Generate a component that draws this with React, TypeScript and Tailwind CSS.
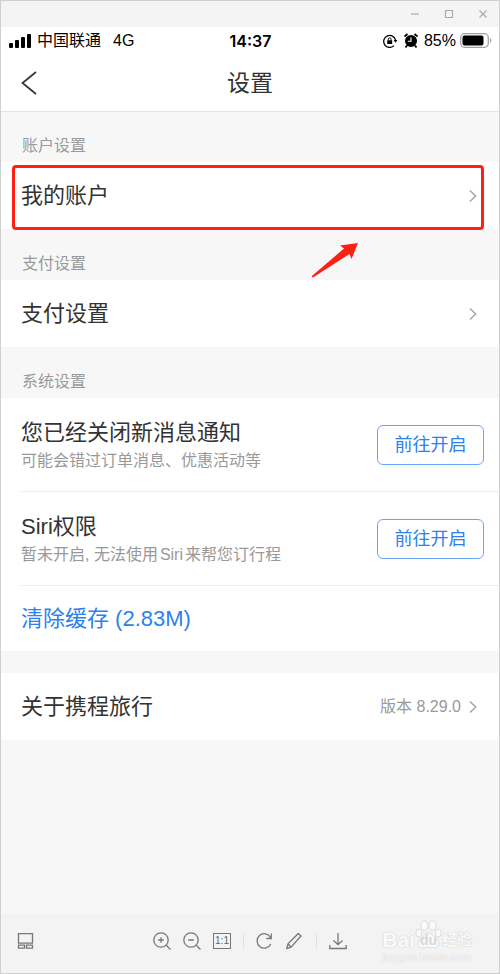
import React from "react";

const SectionTitle = ({ children }: { children: React.ReactNode }) => (
  <h2 className="flex h-[51px] items-end px-[21px] pb-1 text-base leading-6 text-[#9a9a9a] first:h-[50px]">
    {children}
  </h2>
);

const Chevron = () => (
  <svg width="8" height="14" viewBox="0 0 8 14" fill="none" stroke="#a8a8a8" strokeWidth="1.6">
    <path d="M1 1.500 6.600 7 1 12.500" />
  </svg>
);

const LinkRow = ({ label, note }: { label: string; note?: string }) => (
  <a href="#" className="flex h-[67px] items-center justify-between bg-white pr-[22px] pl-5">
    <span className="text-[22px] leading-8">{label}</span>
    <span className="flex items-center gap-2 text-base text-[#999]">
      {note}
      <Chevron />
    </span>
  </a>
);

const permissions = [
  { title: "您已经关闭新消息通知", desc: "可能会错过订单消息、优惠活动等" },
  { title: "Siri权限", desc: "暂未开启, 无法使用Siri来帮您订行程" },
];

const windowButtons = [
  { label: "最小化", d: "M6 12h8" },
  { label: "最大化", d: "M6.500 8.500h7v7h-7z" },
  { label: "关闭", d: "M6.500 8.500l7 7M13.500 8.500l-7 7" },
];

const TitleBar = () => (
  <div className="flex h-[26px] items-center justify-end gap-[10px] bg-[#f4f4f4] pr-1 text-[#aaa]">
    {windowButtons.map((b) => (
      <button key={b.label} aria-label={b.label} className="flex w-6 items-center justify-center">
        <svg width="20" height="24" viewBox="0 0 20 24" fill="none" stroke="currentColor" strokeWidth="1.2">
          <path d={b.d} />
        </svg>
      </button>
    ))}
  </div>
);

const StatusBar = () => (
  <div className="grid h-[27px] grid-cols-[1fr_auto_1fr] items-center pr-[7px] pl-2 text-base text-black">
    <div className="flex items-center">
      <svg width="23" height="14" viewBox="0 0 23 14" fill="currentColor">
        <rect x="0" y="9" width="4" height="5" rx="1" />
        <rect x="6" y="6" width="4" height="8" rx="1" />
        <rect x="12" y="3" width="4" height="11" rx="1" />
        <rect x="18" y="0" width="4" height="14" rx="1" />
      </svg>
      <span className="ml-[5px]">中国联通</span>
      <span className="ml-3">4G</span>
    </div>
    <span className="font-['Inter',sans-serif] font-semibold">14:37</span>
    <div className="flex items-center justify-end">
      <svg width="15" height="14" viewBox="0 0 15 14" fill="none" stroke="currentColor" strokeWidth="1.3">
        <path d="M11 11.600A6 6 0 1 1 12.600 6.200" />
        <path d="M10.600 6h3.800l-1.900 2.800z" fill="currentColor" stroke="none" />
        <rect x="4.200" y="6.300" width="5" height="3.800" rx=".5" fill="currentColor" stroke="none" />
        <path d="M5.300 6.500V5.300a1.400 1.400 0 0 1 2.800 0v1.200" strokeWidth="1" />
      </svg>
      <svg className="ml-[6px]" width="14" height="15" viewBox="0 0 14 15">
        <circle cx="7" cy="8" r="6" />
        <path d="M.5 3.500 3.500 1M13.500 3.500l-3-2.500M3 12.500l-1.500 2M11 12.500l1.500 2" stroke="#000" strokeWidth="1.8" />
        <path d="M7 4.500V8.200H3.800" fill="none" stroke="#fff" strokeWidth="1.1" />
      </svg>
      <span className="ml-[6px]">85%</span>
      <svg className="ml-1" width="32" height="15" viewBox="0 0 32 15">
        <rect x=".7" y=".7" width="27.6" height="13.6" rx="4" fill="none" stroke="#a0a0a0" strokeWidth="1.3" />
        <rect x="2.500" y="2.500" width="21" height="10" rx="2" />
        <path d="M30 5c1.800.7 1.800 4.300 0 5z" fill="#a0a0a0" />
      </svg>
    </div>
  </div>
);

const Tool = ({ label, children }: { label: string; children: React.ReactNode }) => (
  <button aria-label={label}>
    <svg width="18" height="18" viewBox="0 0 18 18" fill="none" stroke="currentColor" strokeWidth="1.3">
      {children}
    </svg>
  </button>
);

const Watermark = () => (
  <div className="absolute right-[27px] bottom-[9px] text-[#fafafa] [text-shadow:0_0_1px_#ccc,0_0_2px_#ddd]">
    <div className="flex items-end font-bold">
      <span className="text-[21px] leading-5">Bai</span>
      <span className="relative h-[30px] w-[27px]">
        <svg width="27" height="30" viewBox="0 0 27 30" fill="#fafafa" stroke="#d8d8d8" strokeWidth=".9">
          <path d="M13.500 13c3 0 4.500 3 7.500 5.500 4 3.500 4 9.500-1 9.500-2.500 0-4-.8-6.500-.8S9.500 28 7 28c-5 0-5-6-1-9.500 3-2.500 4.500-5.500 7.500-5.500z" />
          <ellipse cx="3.800" cy="13" rx="3" ry="4" />
          <ellipse cx="9.500" cy="5.500" rx="3.500" ry="4.800" />
          <ellipse cx="17.500" cy="5.500" rx="3.500" ry="4.800" />
          <ellipse cx="23.200" cy="13" rx="3" ry="4" />
        </svg>
        <span className="absolute inset-x-0 bottom-[2px] text-center text-sm leading-4 text-[#d8d8d8] [text-shadow:none]">
          du
        </span>
      </span>
      <span className="text-[15px] leading-5">经验</span>
    </div>
    <div className="text-[11px] leading-[14px]">jingyan.baidu.com</div>
  </div>
);

const Toolbar = () => (
  <footer className="relative grid h-[59px] grid-cols-[1fr_auto_1fr] items-center bg-[#f3f3f3] px-4 pb-[6px] text-[#777]">
    <div className="flex">
      <Tool label="缩略图">
        <path d="M1.500 1.600h14v9.500h-14zM1.500 13.100h6v3h-6zM9.500 13.100h6v3h-6z" />
      </Tool>
    </div>
    <div className="flex items-center gap-3">
      <Tool label="放大">
        <circle cx="8" cy="8" r="7.2" />
        <path d="M13 13l4.500 4.500M5.200 8h5.600M8 5.200v5.600" />
      </Tool>
      <Tool label="缩小">
        <circle cx="8" cy="8" r="7.2" />
        <path d="M13 13l4.500 4.500M5.200 8h5.600" />
      </Tool>
      <button
        aria-label="原始大小"
        className="h-4 w-[18px] border border-[#777] text-[10px] leading-[14px] text-[#666]"
      >
        1:1
      </button>
      <span className="h-4 w-px bg-[#e2e2e2]" />
      <Tool label="旋转">
        <path d="M14.800 12A7.200 7.200 0 1 1 14.500 5.300M15.300 1.500v5h-5" />
      </Tool>
      <Tool label="编辑">
        <path d="M.8 16.500 2 11.800 12.300 1.500 15 4 5 15.200zM2 11.800l3 3.400" />
      </Tool>
      <span className="h-4 w-px bg-[#e2e2e2]" />
      <Tool label="下载">
        <path d="M9 1v11.500M4.500 8.500L9 12.700l4.500-4.200M.8 13v3.500h16.400V13" />
      </Tool>
    </div>
    <Watermark />
  </footer>
);

export default function App() {
  return (
    <div className="flex min-h-screen flex-col border border-[#cfcfcf] bg-[#f7f7f7] font-['Liberation_Sans','Noto_Sans_CJK_SC',sans-serif] text-[#333]">
      <TitleBar />
      <header className="border-b border-[#e4e4e4] bg-white">
        <StatusBar />
        <div className="grid h-[57px] grid-cols-[1fr_auto_1fr] items-center px-5">
          <button aria-label="返回" className="w-4">
            <svg width="16" height="24" viewBox="0 0 16 24" fill="none" stroke="#333" strokeWidth="1.7">
              <path d="M15 1 1.500 12 15 23" />
            </svg>
          </button>
          <h1 className="text-[23px] leading-8">设置</h1>
        </div>
      </header>

      <main className="flex-1">
        <SectionTitle>账户设置</SectionTitle>
        <div className="relative">
          <LinkRow label="我的账户" />
          <div className="pointer-events-none absolute -bottom-px left-[11px] right-[15px] top-[3px] rounded border-3 border-[#ff2014]" />
          <svg className="absolute top-20 right-[140px]" width="48" height="36" viewBox="0 0 48 36" fill="#ff2014">
            <path d="M47 1 29 3.500l4 3L1.200 33.800c-.8 1 .2 2 1.500 1.300L38.500 12l2 5z" />
          </svg>
        </div>

        <SectionTitle>支付设置</SectionTitle>
        <LinkRow label="支付设置" />

        <SectionTitle>系统设置</SectionTitle>
        <div className="bg-white pl-5">
          {permissions.map((item) => (
            <div key={item.title} className="flex h-[94px] items-center justify-between border-b border-[#ececec] pr-[15px]">
              <div>
                <h3 className="text-[22px] leading-8">{item.title}</h3>
                <p className="text-base leading-6 text-[#999] [text-autospace:normal]">{item.desc}</p>
              </div>
              <button className="h-10 w-[107px] rounded-md border border-[#6aa5f5] text-lg text-[#2c81ee]">
                前往开启
              </button>
            </div>
          ))}
          <button className="flex h-[65px] w-full items-center text-[22px] text-[#2c81ee]">清除缓存 (2.83M)</button>
        </div>

        <div className="mt-[22px]">
          <LinkRow label="关于携程旅行" note="版本 8.29.0" />
        </div>
      </main>

      <Toolbar />
    </div>
  );
}
